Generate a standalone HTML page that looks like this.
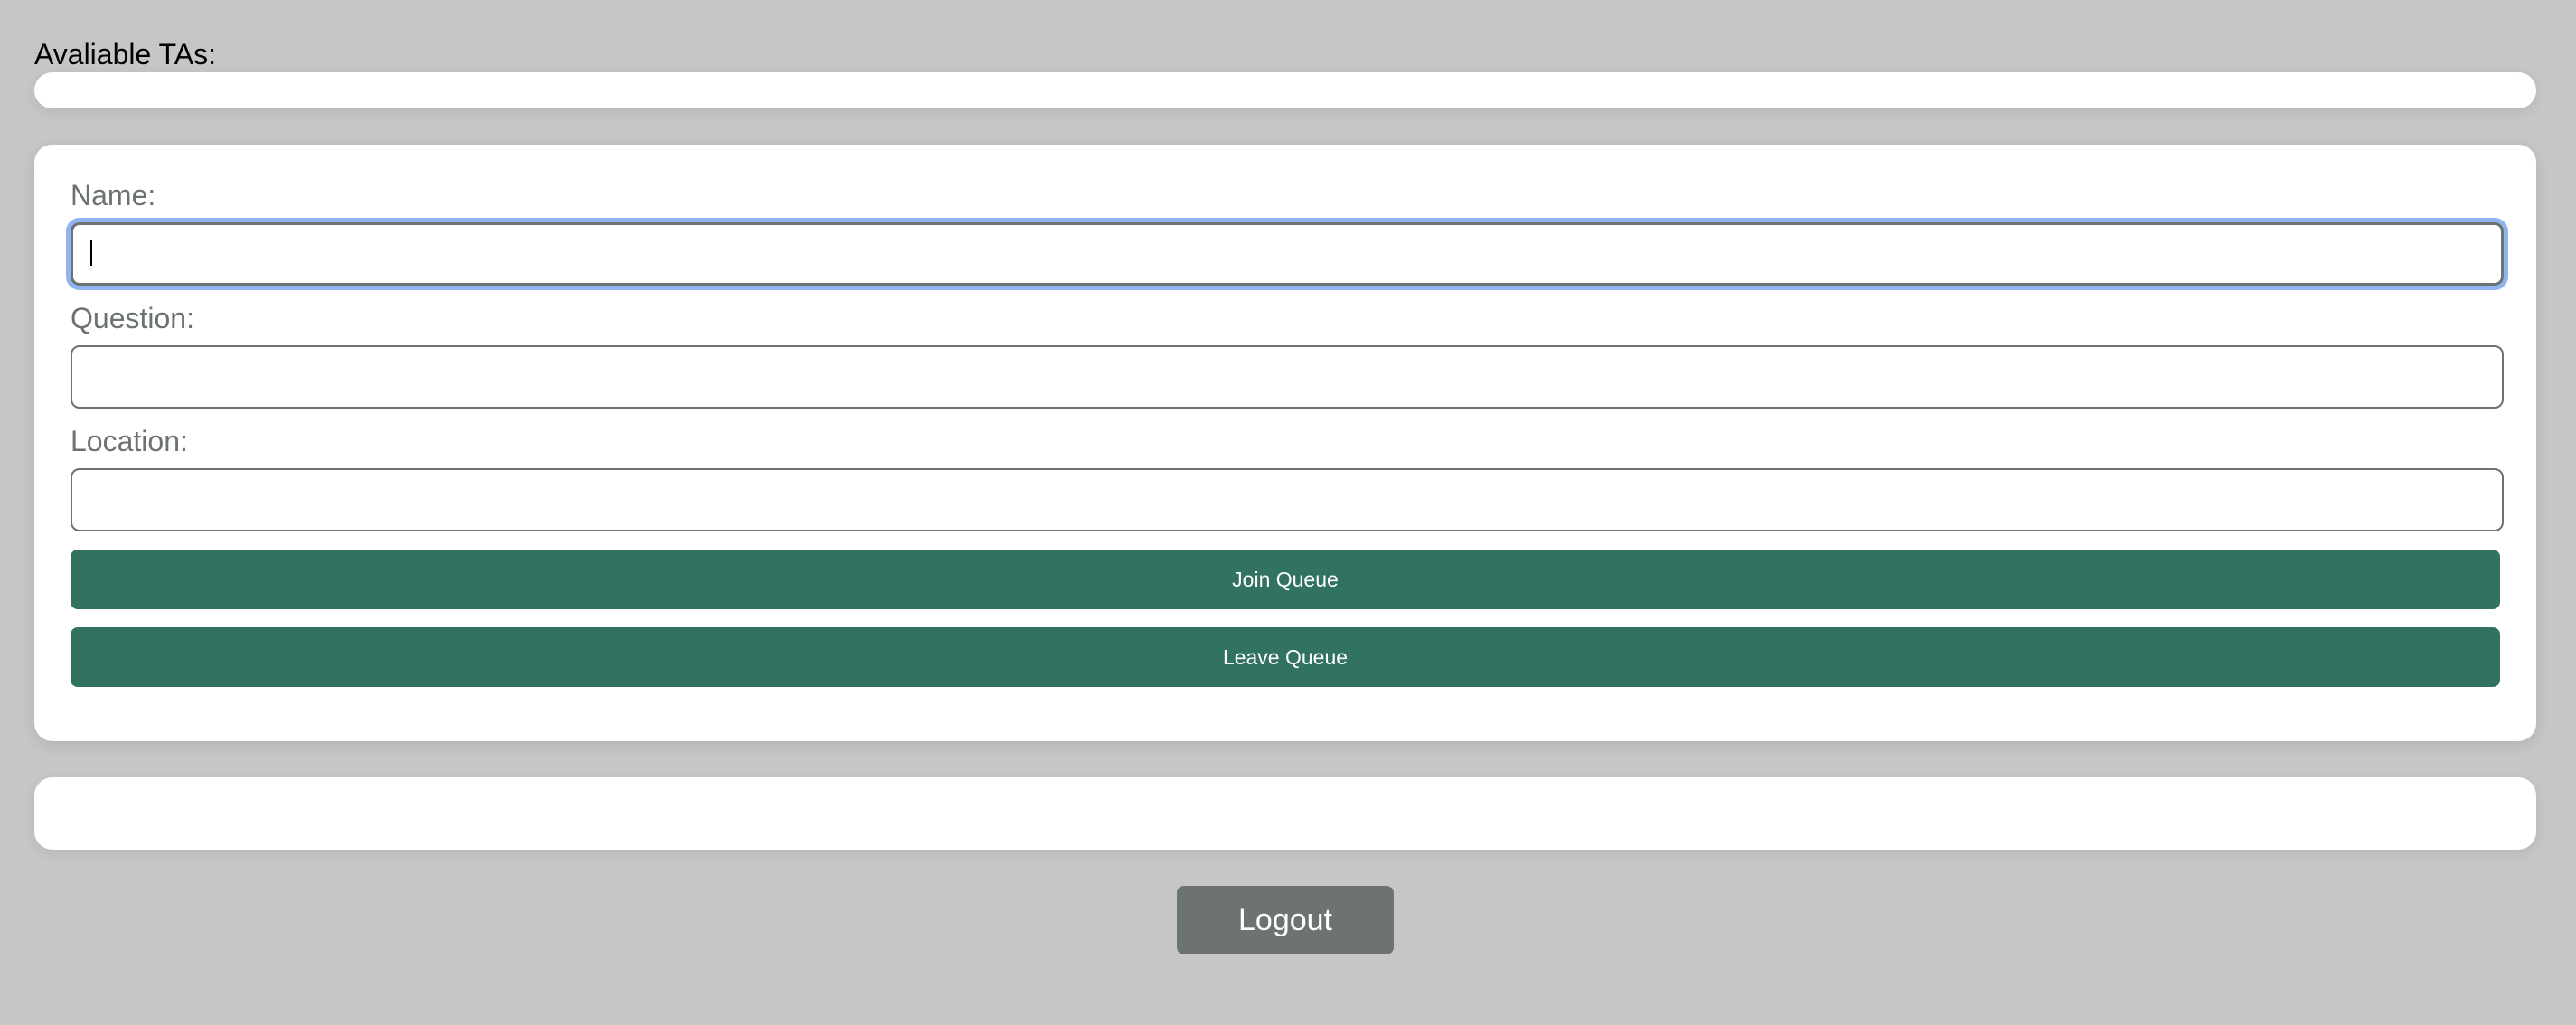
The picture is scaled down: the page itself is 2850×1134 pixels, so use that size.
<!DOCTYPE html>
<html><head><meta charset="utf-8"><style>
*{box-sizing:border-box;margin:0;padding:0}
html,body{width:2850px;height:1134px;background:#c6c6c6;font-family:"Liberation Sans",Arial,sans-serif;overflow:hidden;position:relative}
.abs{position:absolute}
.t{left:38px;top:40px;font-size:32px;color:#000;line-height:40px}
.bar{left:38px;top:80px;width:2768px;height:40px;background:#fff;border-radius:20px;box-shadow:0 4px 14px rgba(0,0,0,0.08)}
.card{left:38px;top:160px;width:2768px;height:660px;background:#fff;border-radius:20px;box-shadow:0 4px 16px rgba(0,0,0,0.1)}
.lbl{left:78px;font-size:32px;color:#6b7270;line-height:40px}
.inp{left:78px;width:2692px;height:70px;border:2px solid #6b7270;border-radius:10px;background:#fff}
.focus{border-width:3px;box-shadow:0 0 0 5px #8fb4f0}
.btn{left:78px;width:2688px;height:66px;background:#327261;border-radius:8px;color:#fff;font-size:23px;text-align:center;line-height:66px}
.bot{left:38px;top:860px;width:2768px;height:80px;background:#fff;border-radius:20px;box-shadow:0 4px 14px rgba(0,0,0,0.08)}
.lo{left:1302px;top:980px;width:240px;height:76px;background:#6c7371;border-radius:8px;color:#fff;font-size:34px;text-align:center;line-height:76px}
.caret{left:100px;top:266px;width:2px;height:28px;background:#000}
</style></head><body>
<div class="abs t">Avaliable TAs:</div>
<div class="abs bar"></div>
<div class="abs card"></div>
<div class="abs lbl" style="top:196px">Name:</div>
<div class="abs inp focus" style="top:246px"></div>
<div class="abs caret"></div>
<div class="abs lbl" style="top:332px">Question:</div>
<div class="abs inp" style="top:382px"></div>
<div class="abs lbl" style="top:468px">Location:</div>
<div class="abs inp" style="top:518px"></div>
<div class="abs btn" style="top:608px">Join Queue</div>
<div class="abs btn" style="top:694px">Leave Queue</div>
<div class="abs bot"></div>
<div class="abs lo">Logout</div>
</body></html>
